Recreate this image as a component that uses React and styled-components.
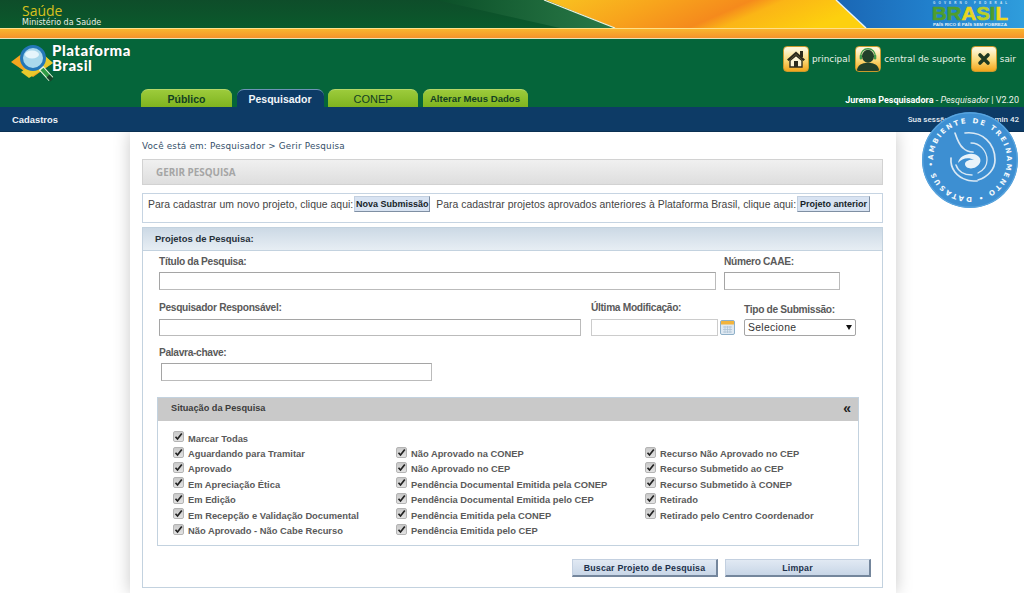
import React from "react"
import styled, { createGlobalStyle } from "styled-components"

const col1 = [
  "Marcar Todas",
  "Aguardando para Tramitar",
  "Aprovado",
  "Em Apreciação Ética",
  "Em Edição",
  "Em Recepção e Validação Documental",
  "Não Aprovado - Não Cabe Recurso",
]
const col2 = [
  "Não Aprovado na CONEP",
  "Não Aprovado no CEP",
  "Pendência Documental Emitida pela CONEP",
  "Pendência Documental Emitida pelo CEP",
  "Pendência Emitida pela CONEP",
  "Pendência Emitida pelo CEP",
]
const col3 = [
  "Recurso Não Aprovado no CEP",
  "Recurso Submetido ao CEP",
  "Recurso Submetido à CONEP",
  "Retirado",
  "Retirado pelo Centro Coordenador",
]

const Banner = () => (
  <BannerSvg viewBox="424 0 600 28" width="600" height="28">
    <defs>
      <linearGradient id="streak" x1="0" x2="1" y1="0" y2="0">
        <stop offset="0" stopColor="#0b4f28" />
        <stop offset="1" stopColor="#2a7a48" />
      </linearGradient>
      <linearGradient id="gold" x1="0" x2="1" y1="0" y2="0.2">
        <stop offset="0" stopColor="#f9c320" />
        <stop offset="0.35" stopColor="#f8a41c" />
        <stop offset="0.62" stopColor="#f58a1c" />
        <stop offset="0.72" stopColor="#fbb516" />
        <stop offset="1" stopColor="#fdd00e" />
      </linearGradient>
      <linearGradient id="sky" x1="0" x2="1" y1="0" y2="0">
        <stop offset="0" stopColor="#1a66b4" />
        <stop offset="0.5" stopColor="#2180cc" />
        <stop offset="1" stopColor="#2f9ddc" />
      </linearGradient>
    </defs>
    <polygon points="436,0 546,0 615,28 560,28" fill="url(#streak)" />
    <polygon points="546,0 836,0 866,28 615,28" fill="url(#gold)" />
    <polygon points="836,0 1024,0 1024,28 866,28" fill="url(#sky)" />
    <line x1="544" y1="0" x2="615" y2="28" stroke="#eef3df" strokeWidth="1.2" />
    <line x1="836" y1="0" x2="866" y2="28" stroke="#e8f3fa" strokeWidth="1.4" />
    <text x="932" y="20" textLength="76" lengthAdjust="spacingAndGlyphs" fontFamily="Liberation Sans" fontWeight="700" fontSize="18" stroke="#4f9e2c" strokeWidth="0.6" fill="#4f9e2c">
      BR<tspan fill="#e9d520" stroke="#e9d520">A</tspan><tspan fill="#b8cf28" stroke="#b8cf28">S</tspan>I<tspan fill="#f2d81e" stroke="#f2d81e">L</tspan>
    </text>
    <text x="933" y="25.500" textLength="74" lengthAdjust="spacingAndGlyphs" fontFamily="Liberation Sans" fontWeight="700" fontSize="3.600" fill="#e6f1f8">
      PAÍS RICO É PAÍS SEM POBREZA
    </text>
    <text x="933" y="4" textLength="74" fontFamily="Liberation Sans" fontWeight="700" fontSize="3" fill="#d5e8f5">
      GOVERNO FEDERAL
    </text>
  </BannerSvg>
)

const LogoMark = () => (
  <svg width="44" height="40" viewBox="0 0 44 40">
    <polygon points="0,19 21,3 42,20 22,34 19,32" fill="#f6a51f" />
    <polygon points="10,29 33,12 42,20 18,35" fill="#e9c92c" />
    <circle cx="22" cy="15" r="11.5" fill="#a9d8ec" stroke="#2477b8" strokeWidth="3" />
    <ellipse cx="21" cy="11.5" rx="7" ry="4" fill="#e6f5fb" />
    <line x1="30" y1="25" x2="40" y2="36" stroke="#e9f5e0" strokeWidth="6" />
    <line x1="31" y1="26" x2="40" y2="36" stroke="#2f9a45" strokeWidth="4" />
    <line x1="37" y1="33" x2="41" y2="37" stroke="#17452a" strokeWidth="4" />
  </svg>
)

const HomeIcon = () => (
  <svg width="20" height="20" viewBox="0 0 20 20">
    <rect x="14" y="2" width="3" height="6" fill="#2c2a1c" />
    <path d="M1 10.5 10 2.5l9 8-1.6 1.6L10 5.6l-7.4 6.5z" fill="#2c2a1c" />
    <path d="M4 11.5 10 6.5l6 5V18H4z" fill="#fdf4d5" stroke="#2c2a1c" strokeWidth="1.4" />
    <rect x="8" y="12" width="4" height="6" fill="#2c2a1c" />
  </svg>
)

const SupportIcon = () => (
  <svg width="26" height="26" viewBox="0 0 26 26">
    <path d="M1 26c0-6 5-9 12-9s12 3 12 9z" fill="#20402a" />
    <ellipse cx="13" cy="10" rx="6.5" ry="7" fill="#20402a" />
    <path d="M5 11C5 5 8.500 2 13 2s8 3 8 9" fill="none" stroke="#3f9a4a" strokeWidth="1.6" />
    <rect x="4" y="8.500" width="2.500" height="5" rx="1" fill="#3f9a4a" />
    <rect x="19.500" y="8.500" width="2.500" height="5" rx="1" fill="#3f9a4a" />
  </svg>
)

const CloseIcon = () => (
  <svg width="14" height="14" viewBox="0 0 14 14">
    <path d="M3 3l8 8M11 3l-8 8" stroke="#1f3a22" strokeWidth="3.600" strokeLinecap="round" />
  </svg>
)

const CalendarIcon = () => (
  <svg width="15" height="15" viewBox="0 0 15 15">
    <rect x="0.500" y="0.500" width="14" height="14" rx="1.500" fill="#dfe9f2" stroke="#8fb0c8" />
    <rect x="1" y="1" width="13" height="3.500" fill="#f2b43c" />
    <path d="M3 7h9M3 9.500h9M3 12h9M5 6v7M7.500 6v7M10 6v7" stroke="#a9c0d2" strokeWidth="0.700" />
  </svg>
)

const TrainingBadge = () => (
  <BadgeSvg viewBox="0 0 98 98" width="98" height="98">
    <defs>
      <path id="badgeRing" d="M 12 49 A 37 37 0 1 1 12 49.010" />
    </defs>
    <circle cx="49" cy="49" r="48" fill="#3d8fd2" />
    <circle cx="49" cy="49" r="47.200" fill="none" stroke="#5aa5de" strokeWidth="1.200" />
    <text fontFamily="DejaVu Sans" fontWeight="700" fontSize="7" fill="#f2f8fc">
      <textPath href="#badgeRing" textLength="230">AMBIENTE DE TREINAMENTO • DATASUS •</textPath>
    </text>
    <g fill="none" stroke="#d9e8f4" strokeLinecap="round">
      <path d="M34 22c2 6 4 12 8 15 3 3 7 4 10 4" strokeWidth="1.700" />
      <path d="M44 22c17-2 30 10 30 27 0 9-7 17-17 20" strokeWidth="1.700" />
      <path d="M50 32c9 0 16 8 16 17 0 6-3 10-9 13" strokeWidth="1.300" />
      <path d="M30 47c-1 11 6 19 16 22 3 1 7 1 10 1" strokeWidth="1.700" />
      <path d="M35 54c2 6 8 10 16 10" strokeWidth="1.500" />
    </g>
    <path d="M37 52c1-8 14-12 20-7 4 3 3 8-2 11-5 3-11 1-11-3 0-3 5-5 9-4-5-3-12-2-16 3z" fill="#e9f3fa" />
  </BadgeSvg>
)

const CheckItem = ({ children }) => (
  <CheckRow>
    <CheckBox>
      <svg width="9" height="9" viewBox="0 0 9 9">
        <path d="M1.500 4.800 3.500 7 7.800 1.500" fill="none" stroke="#222" strokeWidth="1.700" />
      </svg>
    </CheckBox>
    <CheckText>{children}</CheckText>
  </CheckRow>
)

const App = () => {
  return (
    <React.Fragment>
      <GlobalStyle />
      <TopBar>
        <Ministry>
          <MinistryTitle>Saúde</MinistryTitle>
          <MinistrySub>Ministério da Saúde</MinistrySub>
        </Ministry>
        <Banner />
      </TopBar>
      <Stripe />
      <Header>
        <HeaderTop>
          <Logo>
            <LogoMark />
            <LogoText>
              Plataforma
              <br />
              Brasil
            </LogoText>
          </Logo>
          <QuickLinks>
            <QuickLink>
              <IconTile>
                <HomeIcon />
              </IconTile>
              principal
            </QuickLink>
            <QuickLink>
              <IconTile>
                <SupportIcon />
              </IconTile>
              central de suporte
            </QuickLink>
            <QuickLink>
              <IconTile>
                <CloseIcon />
              </IconTile>
              sair
            </QuickLink>
          </QuickLinks>
        </HeaderTop>
        <HeaderBottom>
          <Tabs>
            <Tab $width={91}>Público</Tab>
            <Tab $width={87} $active>
              Pesquisador
            </Tab>
            <Tab $width={90} $light>
              CONEP
            </Tab>
            <Tab $width={105} $small>
              Alterar Meus Dados
            </Tab>
          </Tabs>
          <UserLine>
            <strong>Jurema Pesquisadora</strong> - <em>Pesquisador</em> | V2.20
          </UserLine>
        </HeaderBottom>
      </Header>
      <NavBar>
        <NavTitle>Cadastros</NavTitle>
        <SessionText>Sua sessão expira em 9 min 42</SessionText>
      </NavBar>
      <TrainingBadge />

      <Column>
        <Breadcrumb>Você está em: Pesquisador &gt; Gerir Pesquisa</Breadcrumb>
        <PageTitle>GERIR PESQUISA</PageTitle>
        <InfoBox>
          <InfoText>Para cadastrar um novo projeto, clique aqui:</InfoText>
          <SmallButton $width={76}>Nova Submissão</SmallButton>
          <InfoText $gap={6}>Para cadastrar projetos aprovados anteriores à Plataforma Brasil, clique aqui:</InfoText>
          <SmallButton $width={73}>Projeto anterior</SmallButton>
        </InfoBox>

        <Panel>
          <PanelHeader>Projetos de Pesquisa:</PanelHeader>
          <PanelBody>
            <FormRow $height={46}>
              <Field $width={557}>
                <FieldLabel>Título da Pesquisa:</FieldLabel>
                <TextInput />
              </Field>
              <Field $width={116}>
                <FieldLabel>Número CAAE:</FieldLabel>
                <TextInput />
              </Field>
            </FormRow>
            <FormRow $height={45} $labelHeight={18}>
              <Field $width={422} $after={2}>
                <FieldLabel>Pesquisador Responsável:</FieldLabel>
                <TextInput $height={17} />
              </Field>
              <Field $width={144} $after={1}>
                <FieldLabel>Última Modificação:</FieldLabel>
                <DateWrap>
                  <TextInput $height={17} />
                  <CalendarIcon />
                </DateWrap>
              </Field>
              <Field $width={112} $shift={2}>
                <FieldLabel>Tipo de Submissão:</FieldLabel>
                <SelectWrap>
                  <SelectBox defaultValue="">
                    <option value="">Selecione</option>
                  </SelectBox>
                </SelectWrap>
              </Field>
            </FormRow>
            <FormRow $height={51}>
              <Field $width={273}>
                <FieldLabel>Palavra-chave:</FieldLabel>
                <TextInput $indent={2} $width={271} />
              </Field>
            </FormRow>

            <StatusPanel>
              <StatusHeader>
                <span>Situação da Pesquisa</span>
                <Collapse>«</Collapse>
              </StatusHeader>
              <StatusBody>
                <CheckColumn $width={223}>
                  {col1.map(item => (
                    <CheckItem key={item}>{item}</CheckItem>
                  ))}
                </CheckColumn>
                <CheckColumn $width={249} $offset>
                  {col2.map(item => (
                    <CheckItem key={item}>{item}</CheckItem>
                  ))}
                </CheckColumn>
                <CheckColumn $offset>
                  {col3.map(item => (
                    <CheckItem key={item}>{item}</CheckItem>
                  ))}
                </CheckColumn>
              </StatusBody>
            </StatusPanel>

            <Actions>
              <ActionButton>Buscar Projeto de Pesquisa</ActionButton>
              <ActionButton>Limpar</ActionButton>
            </Actions>
          </PanelBody>
        </Panel>
      </Column>
    </React.Fragment>
  )
}
export default App

//Styled

const GlobalStyle = createGlobalStyle`
  html, body {
    margin: 0;
    padding: 0;
    background: #fff;
    height: 593px;
    overflow: hidden;
    font-family: "Liberation Sans", Arial, sans-serif;
  }
`

const TopBar = styled.div`
  height: 28px;
  display: flex;
  justify-content: space-between;
  background: linear-gradient(#0e4d2a, #0a5a2c);
`
const BannerSvg = styled.svg`
  display: block;
`
const Ministry = styled.div`
  padding: 4px 0 0 22px;
`
const MinistryTitle = styled.div`
  font: 14px/14px "Open Sans", sans-serif;
  color: #d8c01e;
`
const MinistrySub = styled.div`
  font: 8px/9px "DejaVu Sans", sans-serif;
  color: #e8efe6;
`
const Stripe = styled.div`
  height: 11px;
  box-sizing: border-box;
  border-top: 1px solid #ffe08a;
  border-bottom: 1px solid #e8e3b8;
  background: linear-gradient(#f9b52e, #f6932a);
`
const Header = styled.div`
  height: 68px;
  background: #05653a;
  display: flex;
  flex-direction: column;
`
const HeaderTop = styled.div`
  height: 50px;
  display: flex;
  justify-content: space-between;
  padding: 4px 8px 0 11px;
  box-sizing: border-box;
`
const Logo = styled.div`
  display: flex;
  align-items: flex-start;
`
const LogoText = styled.div`
  margin: 0 0 0 -3px;
  font: 900 15px/15px "Lato", sans-serif;
  letter-spacing: 0.500px;
  color: #fff;
  text-shadow: 0 0 1px #0b3a20;
`
const QuickLinks = styled.div`
  display: flex;
  gap: 5px;
  padding-top: 3px;
`
const QuickLink = styled.div`
  height: 26px;
  display: flex;
  align-items: center;
  gap: 3px;
  font: 8.900px "DejaVu Sans", sans-serif;
  color: #e9f2e8;
`
const IconTile = styled.div`
  width: 26px;
  height: 26px;
  box-sizing: border-box;
  border: 1px solid #c99a2c;
  border-radius: 4px;
  overflow: hidden;
  display: flex;
  align-items: center;
  justify-content: center;
  background: linear-gradient(#fdf6d8 10%, #fbd977 55%, #f3a51b);
`
const HeaderBottom = styled.div`
  height: 18px;
  display: flex;
  justify-content: space-between;
  align-items: flex-end;
  padding: 0 5px 0 141px;
`
const Tabs = styled.div`
  display: flex;
  gap: 4.500px;
`
const Tab = styled.div`
  width: ${props => props.$width}px;
  height: 18px;
  box-sizing: border-box;
  display: flex;
  align-items: center;
  justify-content: center;
  border-radius: 7px 7px 0 0;
  background: ${props =>
    props.$active ? "#0d3b66" : "linear-gradient(#9ccb3b, #7fb41f)"};
  border-top: 1px solid ${props => (props.$active ? "#6d93b8" : "#b5d868")};
  color: ${props => (props.$active ? "#f2f6fa" : "#123f22")};
  font-size: ${props => (props.$small ? "9.600px" : props.$light ? "11px" : "10.500px")};
  font-weight: ${props => (props.$light ? 400 : 700)};
`
const UserLine = styled.div`
  padding-bottom: 2px;
  font: 9px "Roboto", sans-serif;
  color: #eef4ea;
  strong {
    font-weight: 700;
    color: #fff;
  }
`
const NavBar = styled.div`
  position: relative;
  z-index: 2;
  height: 25px;
  display: flex;
  justify-content: space-between;
  align-items: center;
  padding: 0 5px 0 12px;
  box-sizing: border-box;
  background: #0d3b66;
  border-bottom: 1px solid #0a3052;
`
const NavTitle = styled.div`
  font: 700 9.400px "Liberation Sans", sans-serif;
  color: #eef3f8;
`
const SessionText = styled.div`
  font: 500 8px "Roboto", sans-serif;
  color: #e4ecf4;
`
const BadgeSvg = styled.svg`
  position: absolute;
  z-index: 3;
  left: 921px;
  top: 111px;
`
const Column = styled.div`
  width: 766px;
  height: 461px;
  margin-left: 130px;
  padding: 8px 13px 0 12px;
  box-sizing: border-box;
  background: #fff;
  box-shadow: 0 0 16px rgba(0, 0, 0, 0.22);
`
const Breadcrumb = styled.div`
  height: 19px;
  font: 8.800px/13px "DejaVu Sans", sans-serif;
  letter-spacing: 0.200px;
  color: #34506a;
`
const PageTitle = styled.div`
  height: 26px;
  box-sizing: border-box;
  padding-left: 13px;
  border: 1px solid #d2d2d2;
  background: linear-gradient(#f0f0f0, #dedede);
  font: 700 9.900px/24px "Open Sans", sans-serif;
  color: #a5a5a5;
`
const InfoBox = styled.div`
  height: 30px;
  margin-top: 8px;
  padding: 2px 0 0 5px;
  box-sizing: border-box;
  display: flex;
  align-items: flex-start;
  border: 1px solid #c6d4e2;
`
const InfoText = styled.div`
  margin-left: ${props => props.$gap || 0}px;
  font-size: 10.400px;
  letter-spacing: 0.030px;
  line-height: 17px;
  color: #444;
  white-space: nowrap;
`
const SmallButton = styled.div`
  width: ${props => props.$width}px;
  height: 16px;
  margin-left: 1px;
  flex: none;
  box-sizing: border-box;
  background: #d8e3f2;
  border: 1px solid #c3d0e0;
  border-right-color: #7f8fa3;
  border-bottom-color: #7f8fa3;
  font: 700 9px/14px "Liberation Sans", sans-serif;
  text-align: center;
  color: #161e28;
  white-space: nowrap;
`
const Panel = styled.div`
  height: 361px;
  margin-top: 4px;
  box-sizing: border-box;
  border: 1px solid #c3d2df;
`
const PanelHeader = styled.div`
  height: 22px;
  padding-left: 12px;
  background: linear-gradient(#ccd9e5, #e7eef4);
  border-bottom: 1px solid #c3d2df;
  font: 700 9.450px/22px "Liberation Sans", sans-serif;
  color: #26303a;
`
const PanelBody = styled.div`
  padding: 4px 0 0 16px;
`
const FieldLabel = styled.div`
  height: 17px;
  font: 700 10.200px/14px "Liberation Sans", sans-serif;
  letter-spacing: -0.320px;
  color: #5a5a5a;
  white-space: nowrap;
`
const FormRow = styled.div`
  height: ${props => props.$height}px;
  display: flex;
  gap: 8px;
  ${FieldLabel} {
    height: ${props => props.$labelHeight || 17}px;
  }
`
const Field = styled.div`
  width: ${props => props.$width}px;
  margin-right: ${props => props.$after || 0}px;
  padding-top: ${props => props.$shift || 0}px;
  flex: none;
`
const TextInput = styled.div`
  width: ${props => (props.$width ? `${props.$width}px` : "100%")};
  height: ${props => props.$height || 18}px;
  margin-left: ${props => props.$indent || 0}px;
  box-sizing: border-box;
  background: #fff;
  border: 1px solid #a9a9a9;
  border-color: #a5a5a5 #bbb #bbb #a5a5a5;
`
const DateWrap = styled.div`
  display: flex;
  align-items: center;
  gap: 2px;
  ${TextInput} {
    width: 127px;
    border-color: #ccc;
  }
  svg {
    flex: none;
  }
`
const SelectWrap = styled.div`
  position: relative;
  margin-top: -2px;
  &::after {
    content: "";
    position: absolute;
    right: 4px;
    top: 6px;
    border: 3.500px solid transparent;
    border-top: 5px solid #111;
    border-bottom: 0;
  }
`
const SelectBox = styled.select`
  display: block;
  width: 112px;
  height: 17px;
  padding: 0 0 0 3px;
  appearance: none;
  background: #fff;
  border: 1px solid #a5a5a5;
  border-radius: 2px;
  font: 10.400px "Liberation Sans", sans-serif;
  letter-spacing: 0.300px;
  color: #333;
`
const StatusPanel = styled.div`
  width: 702px;
  margin-left: -2px;
  box-sizing: border-box;
  border: 1px solid #c3d2df;
`
const StatusHeader = styled.div`
  height: 23px;
  box-sizing: border-box;
  padding: 0 7px 3px 13px;
  display: flex;
  align-items: center;
  justify-content: space-between;
  background: #c9c9c9;
  font: 700 9.200px "Liberation Sans", sans-serif;
  color: #3c3c3c;
`
const Collapse = styled.span`
  font: 700 14px/15px "Liberation Sans", sans-serif;
  color: #222;
`
const StatusBody = styled.div`
  height: 124px;
  box-sizing: border-box;
  padding: 10px 0 0 15px;
  display: flex;
`
const CheckColumn = styled.div`
  width: ${props => (props.$width ? `${props.$width}px` : "auto")};
  padding-top: ${props => (props.$offset ? "15.400px" : 0)};
`
const CheckRow = styled.div`
  height: 15.400px;
  display: flex;
  align-items: center;
`
const CheckBox = styled.span`
  width: 11px;
  height: 11px;
  box-sizing: border-box;
  margin: -4px 4px 0 0;
  flex: none;
  display: flex;
  align-items: center;
  justify-content: center;
  border-radius: 2px;
  border: 1px solid #b4b4b4;
  background: linear-gradient(#c9c9c9, #e3e3e3);
`
const CheckText = styled.span`
  font: 700 9.350px "Liberation Sans", sans-serif;
  color: #5a5a5a;
  white-space: nowrap;
`
const Actions = styled.div`
  width: 712px;
  margin-top: 13px;
  display: flex;
  justify-content: flex-end;
  gap: 7px;
`
const ActionButton = styled.div`
  width: 146px;
  height: 18px;
  box-sizing: border-box;
  background: linear-gradient(#e1e9f3, #c8d6e7);
  border: 1px solid #c3d0e0;
  border-right: 2px solid #74869c;
  border-bottom: 2px solid #74869c;
  font: 700 8.800px/16px "Liberation Sans", sans-serif;
  letter-spacing: 0.200px;
  text-align: center;
  color: #20304a;
`
